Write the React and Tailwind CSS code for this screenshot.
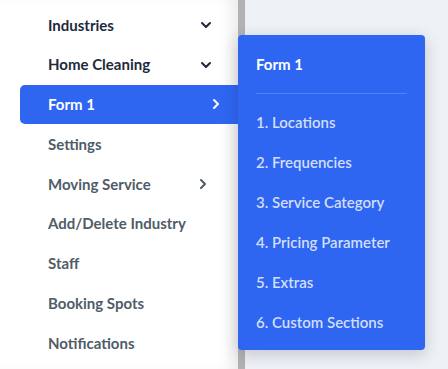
import React from 'react';
import { ChevronDown, ChevronRight } from 'lucide-react';

const sidebarItems = [
  { label: 'Industries', icon: 'down', dark: true },
  { label: 'Home Cleaning', icon: 'down', dark: true },
  { label: 'Form 1', icon: 'right', active: true },
  { label: 'Settings' },
  { label: 'Moving Service', icon: 'right' },
  { label: 'Add/Delete Industry' },
  { label: 'Staff' },
  { label: 'Booking Spots' },
  { label: 'Notifications' },
];

const formSteps = [
  '1. Locations',
  '2. Frequencies',
  '3. Service Category',
  '4. Pricing Parameter',
  '5. Extras',
  '6. Custom Sections',
];

function SidebarRow({ item }) {
  const color = item.active
    ? 'bg-[#2e66f1] text-white rounded-l-[5px]'
    : item.dark
      ? 'text-[#1e293b]'
      : 'text-[#505c68]';

  return (
    <div className={`ml-[20px] h-[39.75px] pl-[28px] flex items-center ${color}`}>
      <span className="flex-1 text-[15px] font-bold">{item.label}</span>
      {item.icon === 'down' && (
        <ChevronDown size={16} strokeWidth={3} className="mr-[24px]" />
      )}
      {item.icon === 'right' && item.active && (
        <ChevronRight size={16} strokeWidth={3} className="mr-[14px]" />
      )}
      {item.icon === 'right' && !item.active && (
        <ChevronRight size={16} strokeWidth={3} className="mr-[27px]" />
      )}
    </div>
  );
}

export default function App() {
  return (
    <div
      className="relative w-[448px] h-[369px] overflow-hidden flex bg-[#eef1f5]"
      style={{ fontFamily: 'Lato, "Noto Sans", sans-serif' }}
    >
      {/* Sidebar */}
      <div className="w-[238px] h-full bg-white pt-[5px] shadow-[inset_-14px_0_18px_-10px_rgba(0,0,0,0.10)]">
        {sidebarItems.map((item) => (
          <SidebarRow key={item.label} item={item} />
        ))}
      </div>

      {/* Scrollbar */}
      <div className="w-[7px] h-full bg-[#b2b2b2]" />

      {/* Flyout menu */}
      <div className="absolute left-[238px] top-[35px] w-[187px] h-[315px] bg-[#2e66f1] rounded-[4px] shadow-[0_4px_16px_rgba(30,41,59,0.22)] pt-[19px] pb-[8px]">
        <div className="px-[18px] h-5 flex items-center text-[15px] font-bold text-white">
          Form 1
        </div>
        <div className="mx-[18px] mt-[19px] h-px bg-[#5283f4]" />
        <div className="mt-[8px]">
          {formSteps.map((step) => (
            <div
              key={step}
              className="h-10 px-[18px] flex items-center text-[15px] font-semibold text-[#d3defc]"
            >
              {step}
            </div>
          ))}
        </div>
      </div>
    </div>
  );
}
